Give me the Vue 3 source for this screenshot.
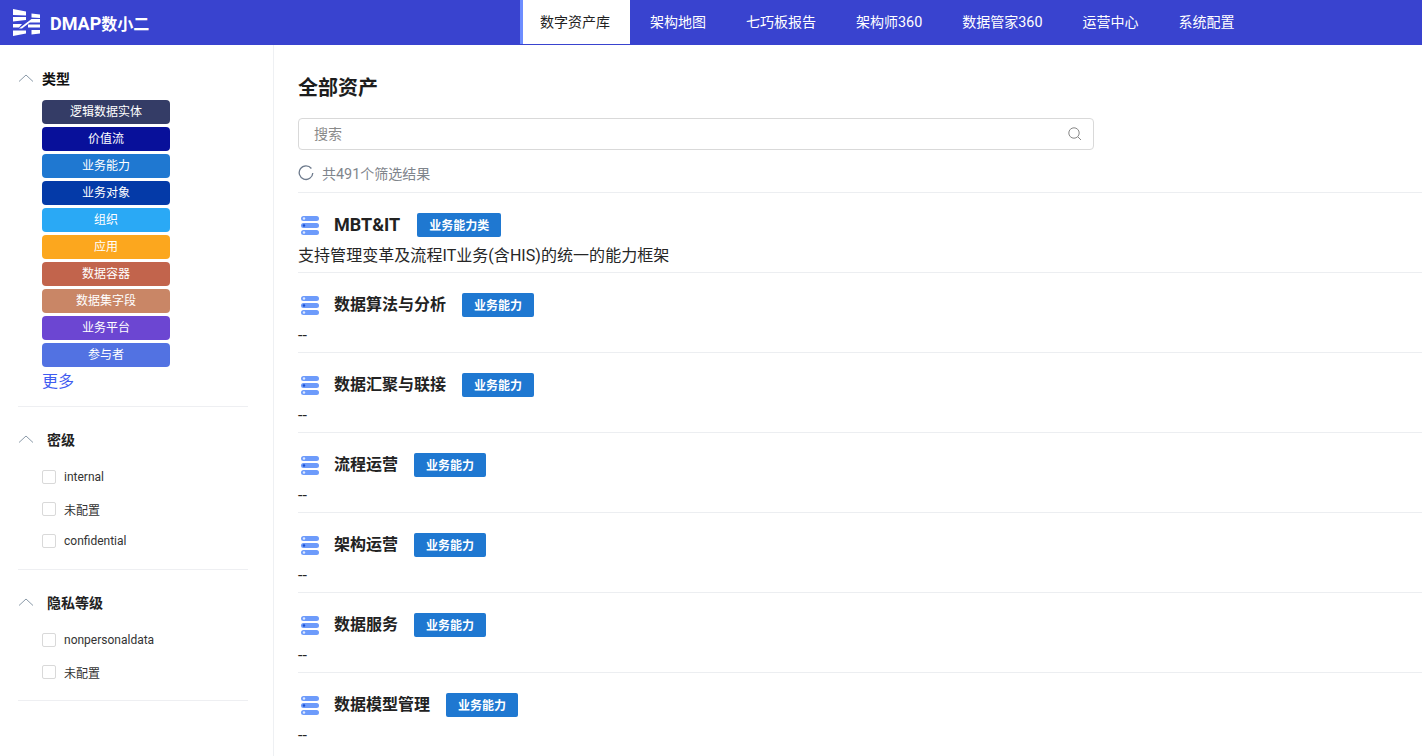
<script setup>
const navs = [
  { label: '数字资产库' },
  { label: '架构地图' },
  { label: '七巧板报告' },
  { label: '架构师', num: '360' },
  { label: '数据管家', num: '360' },
  { label: '运营中心' },
  { label: '系统配置' }
]
const tags = [
  ['逻辑数据实体', '#343c66'],
  ['价值流', '#08109a'],
  ['业务能力', '#1f78d1'],
  ['业务对象', '#043aa8'],
  ['组织', '#2aa9f5'],
  ['应用', '#fca71e'],
  ['数据容器', '#c2644c'],
  ['数据集字段', '#c98666'],
  ['业务平台', '#6c46d2'],
  ['参与者', '#5272e2']
]
const groups = [
  { title: '密级', items: ['internal', '未配置', 'confidential'] },
  { title: '隐私等级', items: ['nonpersonaldata', '未配置'] }
]
const rows = [
  { name: 'MBT&IT', latin: true, tag: '业务能力类', desc: '支持管理变革及流程IT业务(含HIS)的统一的能力框架' },
  { name: '数据算法与分析', tag: '业务能力', desc: '--' },
  { name: '数据汇聚与联接', tag: '业务能力', desc: '--' },
  { name: '流程运营', tag: '业务能力', desc: '--' },
  { name: '架构运营', tag: '业务能力', desc: '--' },
  { name: '数据服务', tag: '业务能力', desc: '--' },
  { name: '数据模型管理', tag: '业务能力', desc: '--' }
]
</script>

<template>
  <div class="page">
    <header class="top">
      <div class="brand">
        <svg class="logo" width="28" height="28" viewBox="0 0 28 28">
          <path d="M0 0 L13 2.500 V6.500 L0 6Z M0 8 H13 V11 L0 12.500Z M0 15 H9 L6 18.500 H0Z M0 21.500 H13 V24.500 L0 27Z" fill="#fff"/>
          <path d="M18.500 4.500 L27 5.500 V9 L18.500 8.500Z M18.500 10 H27 V13.500 H14Z M6 19.500 L14.500 13 H17.500 L9 19.500Z M15 15.500 H27 V18.500 H15Z M18.500 21 H27 V24.500 L18.500 25.500Z" fill="#fff"/>
        </svg>
        <span class="brand-name"><span class="brand-latin">DMAP</span>数小二</span>
      </div>
      <nav class="nav">
        <a v-for="(n, i) in navs" :key="n.label" class="nav-item" :class="{ active: i === 0 }">{{ n.label }}<span v-if="n.num" class="num">{{ n.num }}</span></a>
      </nav>
    </header>

    <div class="body">
      <aside class="side">
        <section class="group first">
          <div class="group-title">
            <svg class="chev" width="16" height="8" viewBox="0 0 16 8"><path d="M1 7.500 L8 1 L15 7.500" fill="none" stroke="#8a9aa8" stroke-width="1"/></svg>
            <span class="t-type">类型</span>
          </div>
          <div class="tags">
            <div v-for="t in tags" :key="t[0]" class="tag" :style="{ background: t[1] }">{{ t[0] }}</div>
          </div>
          <a class="more">更多</a>
        </section>
        <section v-for="g in groups" :key="g.title" class="group">
          <div class="group-title">
            <svg class="chev" width="16" height="8" viewBox="0 0 16 8"><path d="M1 7.500 L8 1 L15 7.500" fill="none" stroke="#8a9aa8" stroke-width="1"/></svg>
            <span class="t-other">{{ g.title }}</span>
          </div>
          <label v-for="it in g.items" :key="it" class="check">
            <span class="box"></span>
            <span>{{ it }}</span>
          </label>
        </section>
      </aside>

      <main class="main">
        <h1 class="heading">全部资产</h1>
        <div class="search">
          <span class="ph">搜索</span>
          <svg width="16" height="16" viewBox="0 0 16 16"><circle cx="7" cy="7" r="5.200" fill="none" stroke="#888" stroke-width="1"/><path d="M10.800 10.800 L14 14" stroke="#888" stroke-width="1"/></svg>
        </div>
        <div class="count">
          <svg width="16" height="16" viewBox="0 0 16 16"><path d="M13.400 3.500 A6.800 6.800 0 1 0 14.800 8" fill="none" stroke="#6d7a8c" stroke-width="1.300"/></svg>
          <span>共<span class="num">491</span>个筛选结果</span>
        </div>
        <div class="list">
          <article v-for="r in rows" :key="r.name" class="row">
            <div class="row-head">
              <svg class="row-icon" width="20" height="19" viewBox="0 0 20 19">
                <g fill="#6d9bfb">
                  <rect x="1" y="0" width="18" height="5" rx="2.500"/>
                  <rect x="1" y="7" width="18" height="5" rx="2.500"/>
                  <rect x="1" y="14" width="18" height="5" rx="2.500"/>
                </g>
                <circle cx="4" cy="2.500" r="1.200" fill="#dfe9ff"/>
                <circle cx="4" cy="9.500" r="1.200" fill="#1b4fd0"/>
                <circle cx="4" cy="16.500" r="1.200" fill="#dfe9ff"/>
              </svg>
              <span class="row-name" :class="{ latin: r.latin }">{{ r.name }}</span>
              <span class="row-tag">{{ r.tag }}</span>
            </div>
            <div class="row-desc">{{ r.desc }}</div>
          </article>
        </div>
      </main>
    </div>
  </div>
</template>

<style>
html, body { margin: 0; height: 100%; overflow: hidden; background: #fff; }
</style>

<style scoped>
.page {
  width: 1422px;
  height: 756px;
  overflow: hidden;
  font-family: Roboto, "Noto Sans CJK SC", sans-serif;
  color: #1f1f1f;
}
.top {
  height: 45px;
  background: #3943cf;
  display: flex;
  align-items: stretch;
  color: #fff;
}
.brand {
  width: 520px;
  display: flex;
  align-items: center;
  padding-left: 13px;
  box-sizing: border-box;
}
.logo { margin-right: 9px; }
.brand-name { font-size: 16px; font-weight: 700; }
.brand-latin { font-size: 18px; }
.nav { display: flex; }
.nav-item {
  padding: 0 20px;
  font-size: 14px;
  line-height: 44px;
  height: 44px;
  white-space: nowrap;
}
.num { font-size: 14.4px; }
.nav-item.active {
  background: #fff;
  color: #222;
  border-left: 3px solid #6d8dff;
  padding: 0 20px 0 17px;
}
.body { display: flex; height: 711px; }
.side {
  width: 274px;
  flex: none;
  box-sizing: border-box;
  border-right: 1px solid #eef0f3;
  padding: 0 25px 0 18px;
}
.group {
  border-bottom: 1px solid #eeeff2;
  padding: 22px 0 12px;
}
.group.first { padding: 23px 0 12px; }
.group-title { display: flex; align-items: center; height: 20px; margin-bottom: 12px; }
.chev { margin-right: 8px; flex: none; }
.t-type { font-size: 14px; font-weight: 700; color: #111; }
.t-other { font-size: 14px; font-weight: 700; color: #222; margin-left: 5px; }
.tags { display: flex; flex-direction: column; gap: 3px; padding-left: 24px; }
.tag {
  width: 128px;
  height: 24px;
  line-height: 25px;
  border-radius: 4px;
  text-align: center;
  color: #fff;
  font-size: 12px;
}
.more {
  display: block;
  margin-left: 24px;
  color: #3f5cf0;
  font-size: 16px;
  line-height: 24px;
  margin-top: 3px;
}
.check {
  display: flex;
  align-items: center;
  height: 32px;
  padding-left: 24px;
  font-size: 12px;
  color: #333;
}
.box {
  width: 12px;
  height: 12px;
  border: 1px solid #d9d9d9;
  border-radius: 2px;
  margin-right: 8px;
  flex: none;
}
.main { flex: 1; min-width: 0; padding: 25px 0 0 24px; }
.heading {
  margin: 0;
  font-size: 20px;
  font-weight: 700;
  line-height: 36px;
  color: #1d1d1d;
}
.search {
  width: 796px;
  height: 32px;
  margin-top: 12px;
  box-sizing: border-box;
  border: 1px solid #d9d9d9;
  border-radius: 4px;
  display: flex;
  align-items: center;
  justify-content: space-between;
  padding: 0 10px 0 15px;
}
.ph { font-size: 14px; color: #8a8a8a; margin-top: -2px; }
.count {
  display: flex;
  align-items: center;
  gap: 8px;
  height: 42px;
  box-sizing: border-box;
  padding-top: 4px;
  font-size: 14px;
  color: #7f858c;
}
.row {
  height: 80px;
  box-sizing: border-box;
  border-top: 1px solid #eceef1;
  padding-top: 20px;
}
.row-head { display: flex; align-items: center; height: 24px; }
.row-icon { margin: 0 14px 0 2px; flex: none; }
.row-name { font-size: 16px; font-weight: 700; color: #222; margin-bottom: 4px; }
.row-name.latin { font-size: 18px; margin: 0 1px 2px 0; }
.row-tag {
  margin-left: 16px;
  background: #1f78d1;
  color: #fff;
  font-size: 12px;
  font-weight: 700;
  height: 24px;
  line-height: 26px;
  padding: 0 12px;
  border-radius: 2px;
}
.row-desc { font-size: 16px; line-height: 22px; margin-top: 8px; color: #262626; white-space: nowrap; letter-spacing: 0.05px; }
</style>
